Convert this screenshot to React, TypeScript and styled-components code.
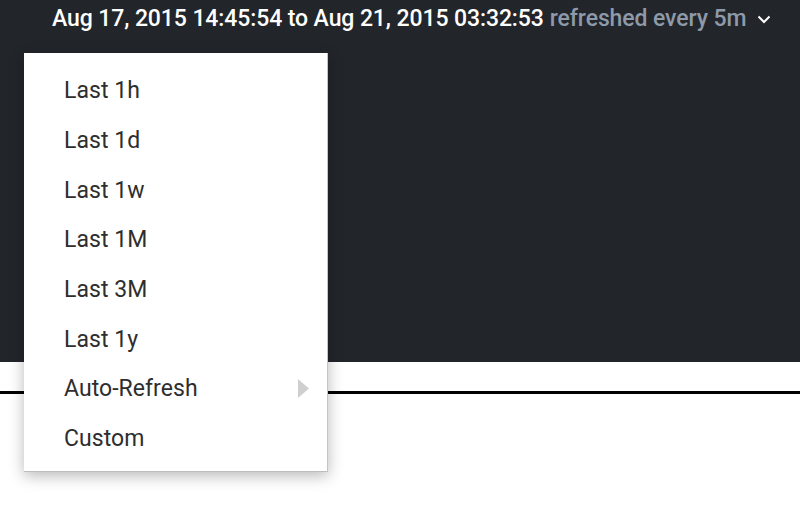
import React from "react";
import styled, { createGlobalStyle } from "styled-components";

const Global = createGlobalStyle`
  html, body { margin: 0; padding: 0; background: #ffffff; }
  body { font-family: Roboto, "Noto Sans", "Liberation Sans", sans-serif; }
  #root { width: 800px; height: 531px; overflow: hidden; }
`;

const Page = styled.div`
  position: relative;
  width: 800px;
  height: 531px;
  display: flex;
  flex-direction: column;
  background: #ffffff;
`;

const Header = styled.header`
  height: 362px;
  background: #22252a;
  display: flex;
  flex-direction: column;
  align-items: flex-start;
  padding-left: 52px;
  box-sizing: border-box;
`;

const RangeBar = styled.div`
  display: flex;
  align-items: center;
  height: 37px;
  font-size: 23px;
  white-space: nowrap;
  letter-spacing: -0.1px;
`;

const RangeText = styled.span`
  color: #ffffff;
  font-weight: 500;
`;

const Refresh = styled.span`
  color: #8e9aa9;
  font-weight: 500;
  margin-left: 6px;
`;

const Chevron = styled.svg`
  margin-left: 10px;
  width: 16px;
  height: 10px;
`;

const Divider = styled.div`
  margin-top: 29px;
  height: 3px;
  background: #000000;
`;

const Menu = styled.ul`
  position: absolute;
  left: 24px;
  top: 53px;
  width: 304px;
  margin: 0;
  padding: 13px 0 7px;
  list-style: none;
  background: #ffffff;
  box-sizing: border-box;
  border-right: 1px solid #c4c4c4;
  border-bottom: 1px solid #bdbdbd;
  box-shadow: 0 4px 14px rgba(0, 0, 0, 0.28);
`;

const Item = styled.li`
  height: 49.7px;
  display: flex;
  align-items: center;
  justify-content: space-between;
  padding: 0 18px 0 40px;
  font-size: 23px;
  color: #2e2e2e;
  letter-spacing: 0.05px;
`;

const SubArrow = styled.svg`
  width: 11px;
  height: 19px;
`;

const items = ["Last 1h", "Last 1d", "Last 1w", "Last 1M", "Last 3M", "Last 1y", "Auto-Refresh", "Custom"];

export default function App() {
  return (
    <>
      <Global />
      <Page>
        <Header>
          <RangeBar>
            <RangeText>Aug 17, 2015 14:45:54 to Aug 21, 2015 03:32:53</RangeText>
            <Refresh>refreshed every 5m</Refresh>
            <Chevron viewBox="0 0 16 10">
              <path d="M2.5 2.5 L8 8 L13.5 2.5" fill="none" stroke="#ffffff" strokeWidth="2" />
            </Chevron>
          </RangeBar>
        </Header>
        <Divider />
        <Menu>
          {items.map((label) => (
            <Item key={label}>
              <span>{label}</span>
              {label === "Auto-Refresh" && (
                <SubArrow viewBox="0 0 11 19">
                  <path d="M0 0 L11 9.5 L0 19 Z" fill="#cfcfcf" />
                </SubArrow>
              )}
            </Item>
          ))}
        </Menu>
      </Page>
    </>
  );
}
